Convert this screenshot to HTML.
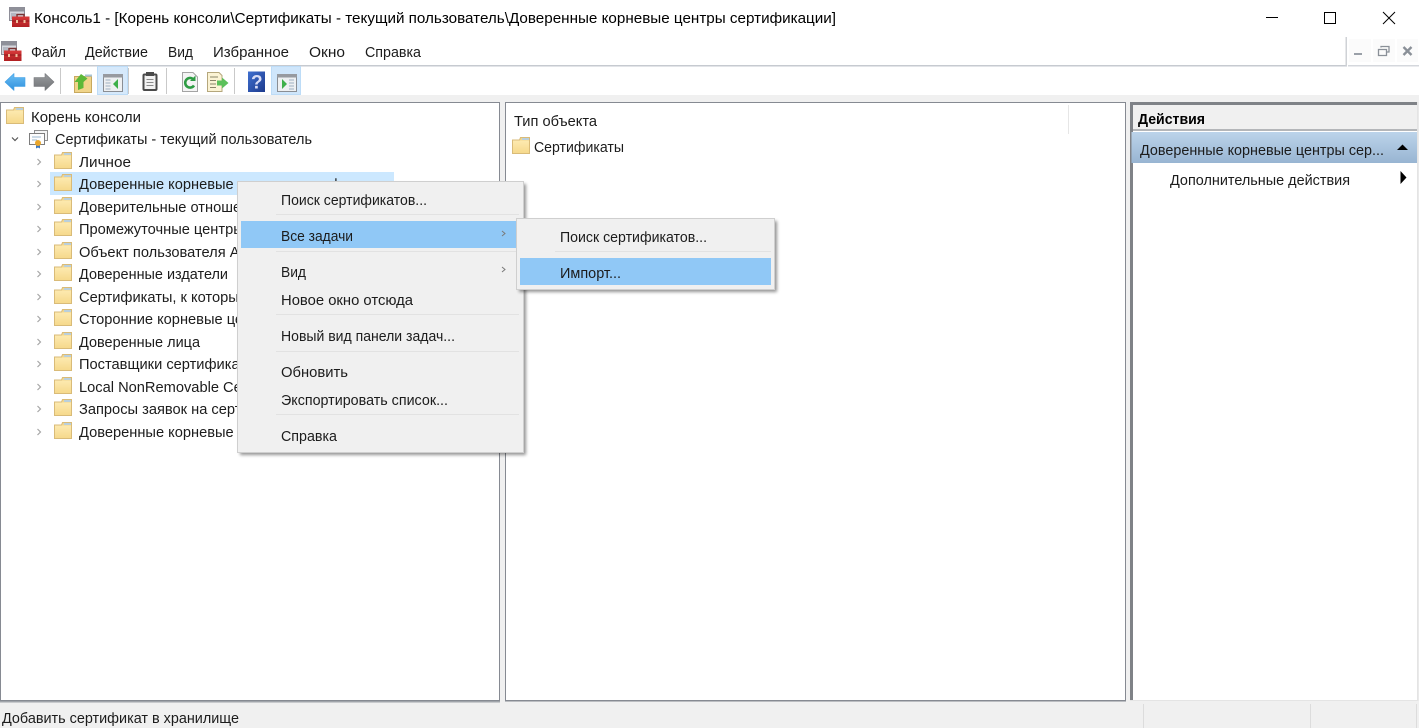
<!DOCTYPE html>
<html lang="ru"><head><meta charset="utf-8"><title>Консоль1</title>
<style>
html,body{margin:0;padding:0;background:#fff;width:1419px;height:728px;overflow:hidden}
svg{display:block}
text{font-family:"Liberation Sans",sans-serif;font-size:14.5px;fill:#1c1c1c}
.c{font-size:14.65px}
</style></head><body>
<svg width="1419" height="728" viewBox="0 0 1419 728" xmlns="http://www.w3.org/2000/svg">
<defs>
<filter id="bl" x="-10%" y="-10%" width="120%" height="120%"><feGaussianBlur stdDeviation="1.5"/></filter>
<linearGradient id="sel" x1="0" y1="0" x2="0" y2="1"><stop offset="0" stop-color="#bcd4ea"/><stop offset="1" stop-color="#98b5d2"/></linearGradient>
<linearGradient id="fol" x1="0" y1="0" x2="0" y2="1"><stop offset="0" stop-color="#fdeab0"/><stop offset="1" stop-color="#f6d98c"/></linearGradient>
<linearGradient id="blue" x1="0" y1="0" x2="0" y2="1"><stop offset="0" stop-color="#6cc0f5"/><stop offset="1" stop-color="#2f8fdc"/></linearGradient>
<linearGradient id="grey" x1="0" y1="0" x2="0" y2="1"><stop offset="0" stop-color="#9a9c9f"/><stop offset="1" stop-color="#6f7275"/></linearGradient>
<linearGradient id="hlp" x1="0" y1="0" x2="1" y2="1"><stop offset="0" stop-color="#3f6fd0"/><stop offset="1" stop-color="#1d3a8c"/></linearGradient>
<linearGradient id="red" x1="0" y1="0" x2="0" y2="1"><stop offset="0" stop-color="#d83a3a"/><stop offset="1" stop-color="#b01f22"/></linearGradient>
<symbol id="folder" viewBox="0 0 18 17" width="18" height="17">
<path d="M.5 3V16.500H17.500V.5H8.500L7.500 3Z" fill="#f1d68f" stroke="#d9bb78"/>
<rect x="10" y="1" width="7" height="2" fill="#b9cfdc"/>
<path d="M1 3.500H17V16H1Z" fill="url(#fol)"/>
</symbol>
<symbol id="toolbox" viewBox="0 0 21 21" width="21" height="21">
<rect x=".5" y=".5" width="15" height="13" fill="#d6d8de" stroke="#8e8e98"/>
<rect x="1" y="1" width="14" height="3.500" fill="#8f9099"/>
<rect x="2" y="6" width="5" height="6" fill="#b4b8c2"/>
<path d="M8 10V7.500H15V10" fill="none" stroke="#7a3434" stroke-width="1.500"/>
<rect x="3" y="9.500" width="17.500" height="10.500" fill="url(#red)"/>
<rect x="3" y="13.500" width="17.500" height="1" fill="#8f1a1c"/>
<rect x="7" y="13" width="2" height="3" fill="#f0c0a0"/><rect x="14.500" y="13" width="2" height="3" fill="#f0c0a0"/>
</symbol>
</defs>

<!-- title bar -->
<use href="#toolbox" x="9" y="7"/>
<text x="34" y="23" textLength="802" lengthAdjust="spacingAndGlyphs" style="font-size:14.5px;fill:#000">Консоль1 - [Корень консоли\Сертификаты - текущий пользователь\Доверенные корневые центры сертификации]</text>
<path d="M1266 17.500H1278" stroke="#000"/>
<rect x="1324.500" y="12.500" width="11" height="11" fill="none" stroke="#000"/>
<path d="M1383 12L1395 24M1395 12L1383 24" stroke="#000"/>

<!-- menu bar -->
<use href="#toolbox" x="1" y="41"/>
<text x="31" y="57" textLength="35" lengthAdjust="spacingAndGlyphs">Файл</text>
<text x="85" y="57" textLength="63" lengthAdjust="spacingAndGlyphs">Действие</text>
<text x="168" y="57" textLength="25" lengthAdjust="spacingAndGlyphs">Вид</text>
<text x="213" y="57" textLength="76" lengthAdjust="spacingAndGlyphs">Избранное</text>
<text x="309" y="57" textLength="36" lengthAdjust="spacingAndGlyphs">Окно</text>
<text x="365" y="57" textLength="56" lengthAdjust="spacingAndGlyphs">Справка</text>
<rect x="0" y="65" width="1347" height="1.500" fill="#c6cad0"/>
<rect x="1345.500" y="37" width="1.500" height="29" fill="#cfd2d6"/>
<rect x="1348" y="65" width="71" height="1.500" fill="#d4d7dc"/>
<rect x="1349" y="39" width="22" height="23" fill="#fbfbfb"/><rect x="1373" y="39" width="22" height="23" fill="#fbfbfb"/><rect x="1397" y="39" width="21" height="23" fill="#fbfbfb"/>
<rect x="1354" y="53" width="8" height="2" fill="#9aa0a8"/>
<path d="M1381 47.500V46.500H1389V52H1387M1378.500 49.500H1386.500V55.500H1378.500Z" fill="none" stroke="#8a9098" stroke-width="1.300"/>
<path d="M1403.500 47L1411.500 55M1411.500 47L1403.500 55" stroke="#8a9098" stroke-width="2.400"/>

<!-- toolbar -->
<path d="M5 82L14 73.500V77.500H25V86.500H14V90.500Z" fill="url(#blue)" stroke="#3f9fe6" stroke-width=".6" stroke-linejoin="round"/>
<path d="M54 82L45 73.500V77.500H34V86.500H45V90.500Z" fill="url(#grey)" stroke="#77797c" stroke-width=".6" stroke-linejoin="round"/>
<rect x="60" y="68" width="1" height="26" fill="#c9c9c9"/>
<path d="M74.500 76.500H91.500V92.500H74.500Z" fill="#f0d48a" stroke="#c8a95e"/>
<path d="M78 90V82H74.500L81 74L87.500 78.500L83.500 82V88Z" fill="#5cb838"/>
<rect x="85" y="74.500" width="7" height="2" fill="#a9c4d4"/>
<rect x="97.500" y="66.500" width="30" height="28" fill="#d6e9fb" stroke="#bddcf7"/>
<rect x="103.500" y="74.500" width="19" height="17" fill="#eef0f2" stroke="#8a8e94"/>
<rect x="103" y="74" width="20" height="3.500" fill="#979aa0"/>
<path d="M105.500 80h5M105.500 83h5M105.500 86h5M105.500 89h5" stroke="#9fb0c2"/>
<path d="M118 79V89L113 84Z" fill="#3eb04a"/>
<rect x="128" y="68" width="1" height="26" fill="#c9c9c9"/>
<rect x="143.500" y="74.500" width="13" height="15.500" rx="1" fill="#f2f2f2" stroke="#4a4a4a" stroke-width="2"/>
<rect x="146" y="72" width="8" height="4" fill="#4a4a4a"/>
<path d="M146.500 79.500h7M146.500 82.500h7M146.500 85.500h7" stroke="#8a8a8a"/>
<rect x="166" y="68" width="1" height="26" fill="#c9c9c9"/>
<path d="M182.500 72.500H193L197.500 77V91.500H182.500Z" fill="#f4f4f4" stroke="#a4a4a4"/>
<path d="M194 85.500A4.800 4.800 0 1 1 193 79" fill="none" stroke="#2e9c44" stroke-width="2.600"/>
<path d="M190 81H195.500V75.500Z" fill="#2e9c44"/>
<path d="M207.500 72.500H219L222 75.500V91.500H207.500Z" fill="#fbf3d4" stroke="#b5a77c"/>
<path d="M210 77h8M210 80.500h6M210 84h6M210 87.500h6" stroke="#8a8468"/>
<path d="M217 80.500h5v-3l6.500 5.500-6.500 5.500v-3h-5z" fill="#5cc05a"/>
<rect x="234" y="68" width="1" height="26" fill="#c9c9c9"/>
<rect x="248" y="71.500" width="17" height="20.500" fill="url(#hlp)"/>
<text x="251" y="88.500" style="font-size:19px;font-weight:bold;fill:#d8dcf6">?</text>
<rect x="271.500" y="66.500" width="29" height="28" fill="#cfe6fb" stroke="#bddcf7"/>
<rect x="277.500" y="74.500" width="19" height="17" fill="#eef0f2" stroke="#8a8e94"/>
<rect x="277" y="74" width="20" height="3.500" fill="#979aa0"/>
<path d="M289 80h5M289 83h5M289 86h5M289 89h5" stroke="#9fb0c2"/>
<path d="M282 79V89L287 84Z" fill="#3eb04a"/>

<!-- band -->
<rect x="0" y="95" width="1419" height="608" fill="#f0f0f0"/>

<!-- left panel -->
<rect x=".5" y="102.500" width="499" height="598" fill="#fff" stroke="#868a92"/>
<rect x="50" y="172" width="344" height="23" fill="#cce8ff"/>
<use href="#folder" x="6" y="107"/>
<text x="31" y="122" textLength="110" lengthAdjust="spacingAndGlyphs">Корень консоли</text>
<path d="M12 137.500L15 140.500L18 137.500" fill="none" stroke="#555" stroke-width="1.200"/>
<rect x="34.500" y="130.500" width="13" height="10" fill="#f4f4f4" stroke="#8f8f8f"/>
<rect x="29.500" y="133.500" width="15" height="11" fill="#fdfdfd" stroke="#7d7d7d"/>
<path d="M32 137h9M32 140h5" stroke="#9cb6cf"/>
<path d="M36 144.500v4l2-1 2 1v-4" fill="#3a76c0"/>
<circle cx="38" cy="143" r="3" fill="#eaa62a"/>
<text x="55" y="144" textLength="257" lengthAdjust="spacingAndGlyphs">Сертификаты - текущий пользователь</text>
<g fill="none" stroke="#a6a6a6" stroke-width="1.200">
<path d="M37.500 159L40.500 162L37.500 165"/><path d="M37.500 181L40.500 184L37.500 187"/><path d="M37.500 204L40.500 207L37.500 210"/><path d="M37.500 226L40.500 229L37.500 232"/><path d="M37.500 249L40.500 252L37.500 255"/><path d="M37.500 271L40.500 274L37.500 277"/><path d="M37.500 294L40.500 297L37.500 300"/><path d="M37.500 316L40.500 319L37.500 322"/><path d="M37.500 339L40.500 342L37.500 345"/><path d="M37.500 361L40.500 364L37.500 367"/><path d="M37.500 384L40.500 387L37.500 390"/><path d="M37.500 406L40.500 409L37.500 412"/><path d="M37.500 429L40.500 432L37.500 435"/>
</g>
<use href="#folder" x="54" y="152"/><use href="#folder" x="54" y="174"/><use href="#folder" x="54" y="197"/><use href="#folder" x="54" y="219"/><use href="#folder" x="54" y="242"/><use href="#folder" x="54" y="264"/><use href="#folder" x="54" y="287"/><use href="#folder" x="54" y="309"/><use href="#folder" x="54" y="332"/><use href="#folder" x="54" y="354"/><use href="#folder" x="54" y="377"/><use href="#folder" x="54" y="399"/><use href="#folder" x="54" y="422"/>
<text x="79" y="167" textLength="52" lengthAdjust="spacingAndGlyphs">Личное</text>
<text x="79" y="189" class="c">Доверенные корневые центры сертификации</text>
<text x="79" y="212" class="c">Доверительные отношения</text>
<text x="79" y="234" class="c">Промежуточные центры сертификации</text>
<text x="79" y="257" class="c">Объект пользователя Active Directory</text>
<text x="79" y="279" textLength="149" lengthAdjust="spacingAndGlyphs">Доверенные издатели</text>
<text x="79" y="302" class="c">Сертификаты, к которым нет доверия</text>
<text x="79" y="324" class="c">Сторонние корневые центры сертификации</text>
<text x="79" y="347" textLength="121" lengthAdjust="spacingAndGlyphs">Доверенные лица</text>
<text x="79" y="369" class="c">Поставщики сертификатов проверки подлинности</text>
<text x="79" y="392" class="c">Local NonRemovable Certificates</text>
<text x="79" y="414" class="c">Запросы заявок на сертификат</text>
<text x="79" y="437" class="c">Доверенные корневые сертификаты смарт-карты</text>

<!-- middle panel -->
<rect x="505.500" y="102.500" width="620" height="598" fill="#fff" stroke="#868a92"/>
<text x="514" y="126" textLength="83" lengthAdjust="spacingAndGlyphs">Тип объекта</text>
<rect x="1068" y="105" width="1" height="29" fill="#e6e6e6"/>
<use href="#folder" x="512" y="137"/>
<text x="534" y="152" textLength="90" lengthAdjust="spacingAndGlyphs">Сертификаты</text>

<!-- right panel -->
<rect x="1130" y="102" width="288" height="599" fill="#fff"/>
<rect x="1130" y="102" width="288" height="3" fill="#7f8287"/>
<rect x="1130" y="102" width="3" height="599" fill="#7f8287"/>
<rect x="1417" y="102" width="1.500" height="599" fill="#e4e4e4"/>
<rect x="1130" y="700" width="288" height="1.500" fill="#e4e4e4"/>
<rect x="1133" y="105" width="284" height="24" fill="#f0f0f0"/>
<rect x="1133" y="129" width="284" height="2" fill="#b4b6b9"/>
<text x="1138" y="124" textLength="67" lengthAdjust="spacingAndGlyphs" style="font-weight:bold;fill:#000">Действия</text>
<rect x="1131.500" y="132" width="285.500" height="31" fill="url(#sel)"/>
<text x="1140" y="155" textLength="244" lengthAdjust="spacingAndGlyphs">Доверенные корневые центры сер...</text>
<path d="M1397 150L1402.500 144.500L1408 150Z" fill="#000"/>
<text x="1170" y="185" textLength="180" lengthAdjust="spacingAndGlyphs">Дополнительные действия</text>
<path d="M1400.500 171V184L1406.500 177.500Z" fill="#000"/>

<!-- status bar -->
<rect x="0" y="701" width="1419" height="1.500" fill="#a0a4aa"/>
<rect x="500" y="701" width="630" height="2" fill="#f0f0f0"/>
<rect x="505" y="700" width="621" height="1.500" fill="#868a92"/>
<rect x="1126" y="701" width="293" height="2" fill="#f0f0f0"/>
<rect x="0" y="703" width="1419" height="25" fill="#f0f0f0"/>
<rect x="1143" y="704" width="1" height="24" fill="#dcdcdc"/>
<rect x="1310" y="704" width="1" height="24" fill="#dcdcdc"/>
<rect x="1416" y="704" width="1" height="24" fill="#dcdcdc"/>
<text x="2" y="723" textLength="237" lengthAdjust="spacingAndGlyphs">Добавить сертификат в хранилище</text>

<!-- context menu -->
<rect x="240" y="184" width="286" height="271" fill="#000" opacity=".42" filter="url(#bl)"/>
<rect x="237.500" y="181.500" width="286" height="271" fill="#f0f0f0" stroke="#cfcfcf"/>
<rect x="241" y="221" width="275" height="27" fill="#90c8f6"/>
<g fill="#e2e2e2">
<rect x="276" y="214" width="243" height="1"/><rect x="276" y="251" width="243" height="1"/><rect x="276" y="314" width="243" height="1"/><rect x="276" y="351" width="243" height="1"/><rect x="276" y="414" width="243" height="1"/>
</g>
<text x="281" y="205" textLength="146" lengthAdjust="spacingAndGlyphs">Поиск сертификатов...</text>
<text x="281" y="241" textLength="72" lengthAdjust="spacingAndGlyphs">Все задачи</text>
<text x="281" y="277" textLength="25" lengthAdjust="spacingAndGlyphs">Вид</text>
<text x="281" y="305" textLength="132" lengthAdjust="spacingAndGlyphs">Новое окно отсюда</text>
<text x="281" y="341" textLength="174" lengthAdjust="spacingAndGlyphs">Новый вид панели задач...</text>
<text x="281" y="377" textLength="67" lengthAdjust="spacingAndGlyphs">Обновить</text>
<text x="281" y="405" textLength="167" lengthAdjust="spacingAndGlyphs">Экспортировать список...</text>
<text x="281" y="441" textLength="56" lengthAdjust="spacingAndGlyphs">Справка</text>
<path d="M502 231L505 233.500L502 236M502 267L505 269.500L502 272" fill="none" stroke="#7a7a7a"/>

<!-- submenu -->
<rect x="519" y="221" width="258" height="71" fill="#000" opacity=".42" filter="url(#bl)"/>
<rect x="516.500" y="218.500" width="258" height="71" fill="#f0f0f0" stroke="#cfcfcf"/>
<rect x="520" y="258" width="251" height="27" fill="#90c8f6"/>
<rect x="555" y="251" width="216" height="1" fill="#e2e2e2"/>
<text x="560" y="242" textLength="147" lengthAdjust="spacingAndGlyphs">Поиск сертификатов...</text>
<text x="560" y="278" textLength="61" lengthAdjust="spacingAndGlyphs">Импорт...</text>
</svg>
</body></html>
